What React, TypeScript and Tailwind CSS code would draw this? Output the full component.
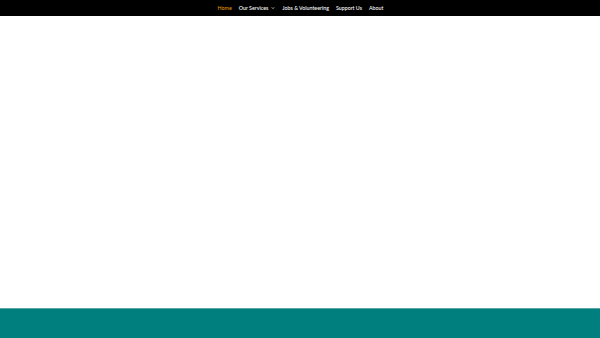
import React from 'react';

const NavItem: React.FC<{ label: string; active?: boolean; caret?: boolean }> = ({ label, active, caret }) => (
    <a className={`flex items-center ${active ? 'text-[#e09900]' : 'text-white'}`}>
        {label}
        {caret && (
            <svg viewBox="0 0 10 10" className="w-[4px] h-[4px] ml-[3px]" fill="none" stroke="currentColor" strokeWidth="1.8">
                <path d="M2 3.5 L5 6.5 L8 3.5" />
            </svg>
        )}
    </a>
);

export default function App() {
    return (
        <div className="w-[600px] h-[338px] flex flex-col bg-white" style={{ fontFamily: 'Lato, "Open Sans", sans-serif' }}>
            <header className="h-[16px] bg-black flex items-center justify-center gap-[7px] text-[5.3px] font-medium leading-none pt-[1px] pl-[1px]">
                <NavItem label="Home" active />
                <NavItem label="Our Services" caret />
                <NavItem label="Jobs & Volunteering" />
                <NavItem label="Support Us" />
                <NavItem label="About" />
            </header>
            <main className="flex-1" />
            <footer className="h-[30px] bg-[#007f7f] border-t border-[#5aa5a5]" />
        </div>
    );
}
